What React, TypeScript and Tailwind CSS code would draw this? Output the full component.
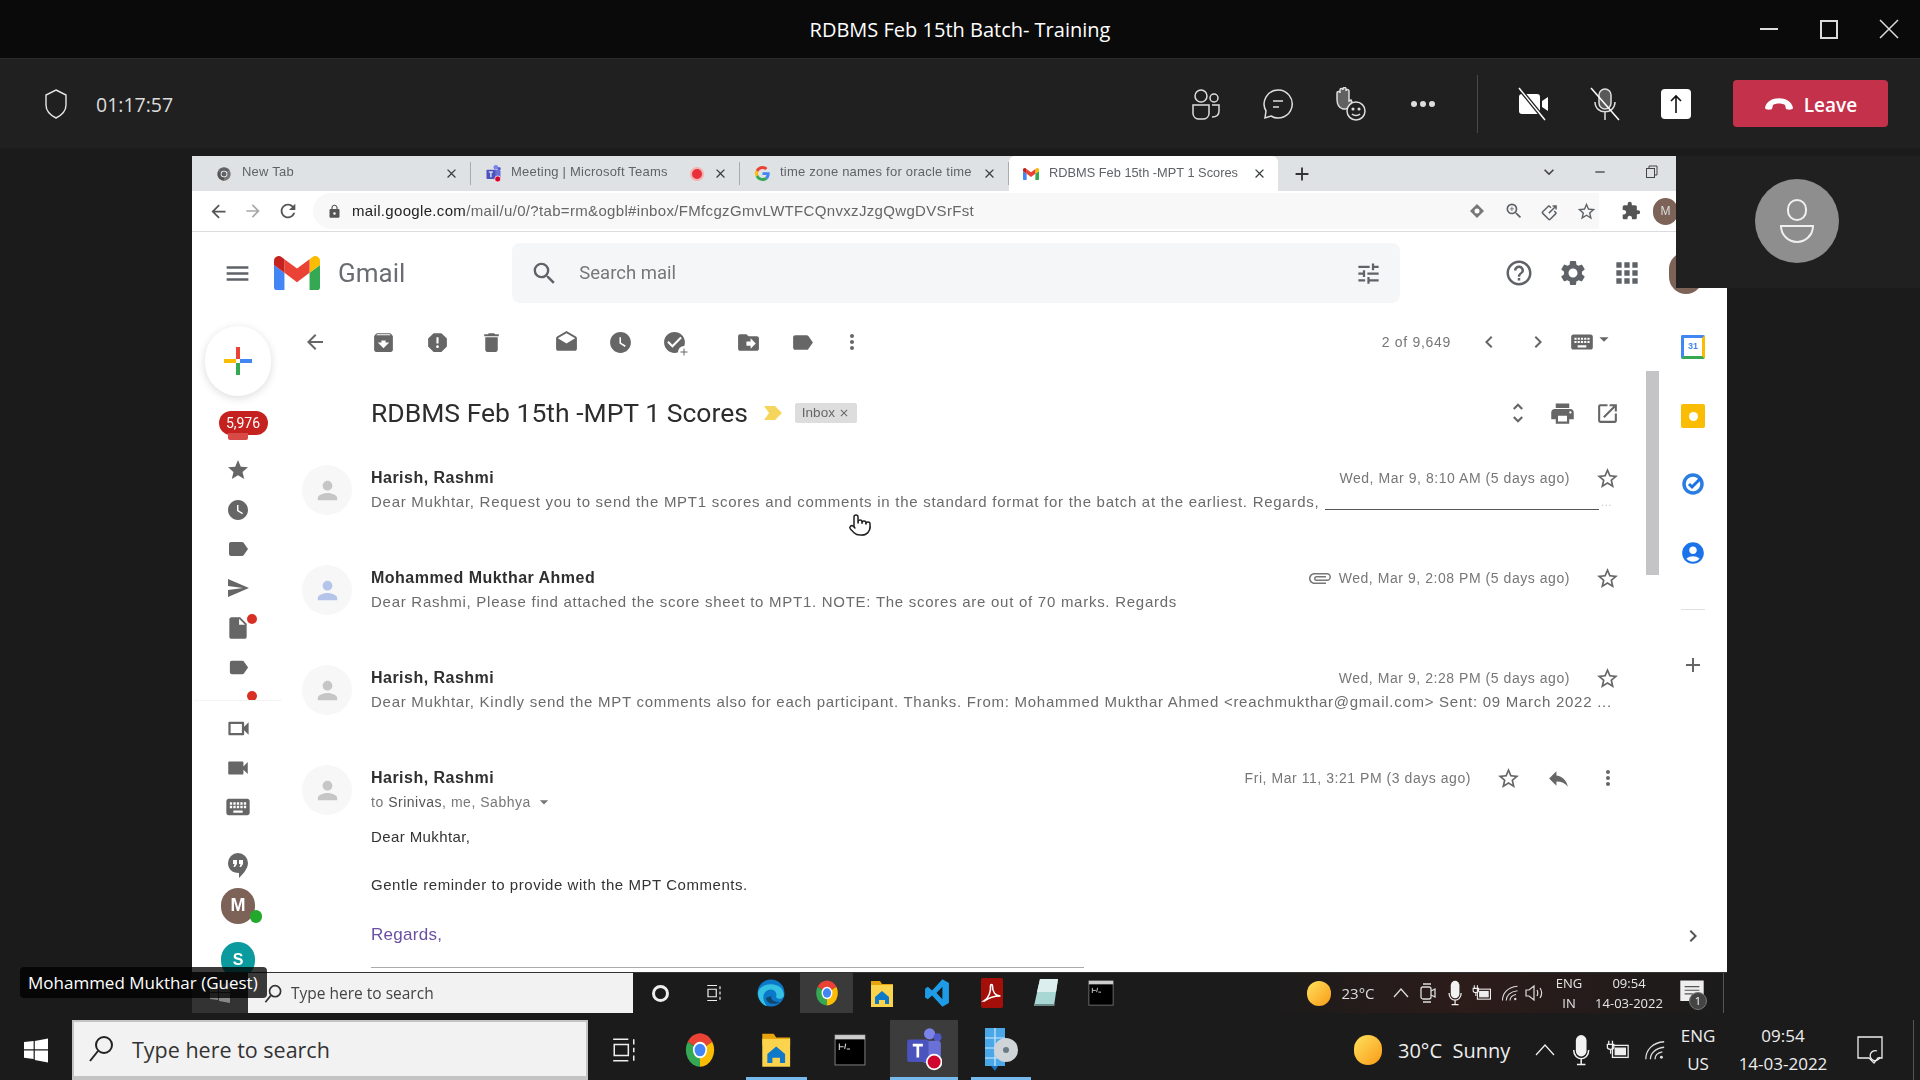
import React from "react";
import { Pointer } from "lucide-react";
import {
  MdArrowBack, MdArrowForward, MdRefresh, MdLock, MdMenu, MdSearch, MdTune, MdHelpOutline, MdSettings, MdApps,
  MdArchive, MdReport, MdDelete, MdDrafts, MdWatchLater, MdCheckCircle, MdDriveFileMove, MdLabel, MdMoreVert,
  MdChevronLeft, MdChevronRight, MdKeyboard, MdArrowDropDown, MdUnfoldMore, MdPrint, MdOpenInNew, MdStarBorder,
  MdStar, MdReply, MdAttachFile, MdVideocam, MdOutlineVideocam, MdPerson, MdSend, MdInsertDriveFile, MdAdd,
  MdAccountCircle, MdExtension, MdZoomIn, MdIosShare, MdClose, MdRemove, MdExpandMore,
} from "react-icons/md";

const GmailM = ({ s = 44 }: { s?: number }) => (
  <svg width={s} height={s * 0.75} viewBox="52 42 88 66">
    <path fill="#4285f4" d="M58 108h14V74L52 59v43c0 3.32 2.69 6 6 6" />
    <path fill="#34a853" d="M120 108h14c3.32 0 6-2.69 6-6V59l-20 15" />
    <path fill="#fbbc04" d="M120 48v26l20-15v-8c0-7.42-8.47-11.65-14.4-7.2" />
    <path fill="#ea4335" d="M72 74V48l24 18 24-18v26L96 92" />
    <path fill="#c5221f" d="M52 51v8l20 15V48l-5.6-4.2c-5.94-4.45-14.4-.22-14.4 7.2" />
  </svg>
);
const GoogleG = ({ s = 14 }: { s?: number }) => (
  <svg width={s} height={s} viewBox="0 0 48 48">
    <path fill="#EA4335" d="M24 9.5c3.54 0 6.71 1.22 9.21 3.6l6.85-6.85C35.9 2.38 30.47 0 24 0 14.62 0 6.51 5.38 2.56 13.22l7.98 6.19C12.43 13.72 17.74 9.5 24 9.5z" />
    <path fill="#4285F4" d="M46.98 24.55c0-1.57-.15-3.09-.38-4.55H24v9.02h12.94c-.58 2.96-2.26 5.48-4.78 7.18l7.73 6c4.51-4.18 7.09-10.36 7.09-17.65z" />
    <path fill="#FBBC05" d="M10.53 28.59c-.48-1.45-.76-2.99-.76-4.59s.27-3.14.76-4.59l-7.98-6.19C.92 16.46 0 20.12 0 24c0 3.88.92 7.54 2.56 10.78l7.97-6.19z" />
    <path fill="#34A853" d="M24 48c6.48 0 11.93-2.13 15.89-5.81l-7.73-6c-2.15 1.45-4.92 2.3-8.16 2.3-6.26 0-11.57-4.22-13.47-9.91l-7.98 6.19C6.51 42.62 14.62 48 24 48z" />
  </svg>
);
const Chrome = ({ s = 30, w, mono }: { s?: number; w?: number; mono?: boolean }) => (
  <svg width={w ?? s} height={s} viewBox="0 0 48 48" preserveAspectRatio="none">
    <path fill={mono ? "#5f6368" : "#ea4335"} d="M24 24L6.68 14A20 20 0 0 1 41.32 14z" />
    <path fill={mono ? "#777" : "#fbbc04"} d="M24 24L41.32 14A20 20 0 0 1 24 44z" />
    <path fill={mono ? "#555" : "#34a853"} d="M24 24L24 44A20 20 0 0 1 6.68 14z" />
    <circle cx="24" cy="24" r="10" fill="#fff" />
    <circle cx="24" cy="24" r="7.6" fill={mono ? "#5f6368" : "#4285f4"} />
  </svg>
);
const Folder = ({ s = 32 }: { s?: number }) => (
  <svg width={s * 0.8} height={s} viewBox="0 0 24 30">
    <path fill="#e8a40c" d="M1 3h9l2 3h11v6H1z" />
    <path fill="#fcd34d" d="M1 7h22v22H1z" />
    <path fill="#0f78c9" d="M12 13l7 6v7h-4v-4H9v4H5v-7z" />
  </svg>
);
const Cmd = ({ s = 30 }: { s?: number }) => (
  <svg width={s} height={s} viewBox="0 0 30 30">
    <rect x="1" y="1" width="28" height="28" fill="#000" stroke="#777" />
    <rect x="1" y="1" width="28" height="4" fill="#ccc" />
    <path d="M5 12h4M5 9v6M11 9l-1 5M12 14h3" stroke="#ddd" strokeWidth="1" fill="none" />
  </svg>
);
const Teams = ({ s = 40 }: { s?: number }) => (
  <svg width={s} height={s * 1.25} viewBox="0 0 32 40">
    <circle cx="21" cy="7" r="5" fill="#7b83eb" />
    <circle cx="28" cy="10" r="3.5" fill="#5059c9" />
    <rect x="15" y="13" width="16" height="20" rx="3" fill="#6a71d6" />
    <rect x="1" y="12" width="19" height="20" rx="2" fill="#4b53bc" />
    <path d="M6 17h9M10.5 17v11" stroke="#fff" strokeWidth="2.4" fill="none" />
    <circle cx="25" cy="32" r="6.5" fill="#d1062f" stroke="#fff" strokeWidth="1.5" />
  </svg>
);
const SetupIcon = () => (
  <svg width="36" height="46" viewBox="0 0 36 46">
    <rect x="2" y="2" width="20" height="38" fill="#4aa7e8" />
    <path d="M2 12h20M2 22h20M2 32h20M12 2v38" stroke="#cfe9fb" strokeWidth="1.2" />
    <circle cx="23" cy="24" r="12" fill="#cfd4d8" />
    <circle cx="23" cy="24" r="3" fill="#6b7a85" />
    <path d="M8 40l4 5 3-5z" fill="#1670bd" />
  </svg>
);
const Edge = () => (
  <svg width="28" height="30" viewBox="0 0 28 30">
    <circle cx="14" cy="15" r="13.5" fill="#0b79c9" />
    <path d="M1 15C2 4 26 2 27 17c0 4-6 5-8 2 2-5-3-9-8-7-5 2-7 9-1 16C5 27 1 21 1 15z" fill="#35c1e1" />
    <path d="M9 20c0 5 8 8 14 4-6 0-9-2-9-6z" fill="#1b1b1b" opacity=".55" />
  </svg>
);
const VSCode = () => (
  <svg width="26" height="30" viewBox="0 0 24 24" preserveAspectRatio="none">
    <path fill="#1f9ce8" fillRule="evenodd" d="M17 1l6 3v16l-6 3-9.5-9-4 3L1 15.5v-7L3.500 7l4 3L17 1zM17 7l-5.500 5 5.500 5z" />
  </svg>
);
const Acrobat = () => (
  <svg width="22" height="30" viewBox="0 0 22 30">
    <rect width="22" height="30" rx="2" fill="#a50f0a" />
    <path d="M3 23c5-3 7-10 6.500-15 0-2 2-2 2 0 0 6 3 10 8 10-6 0-11 1-16 5z" fill="none" stroke="#fff" strokeWidth="1.6" />
  </svg>
);
const Notes = () => (
  <svg width="26" height="30" viewBox="0 0 26 30">
    <path d="M7 1h18l-4 27H1z" fill="#a9d8d4" />
    <path d="M7 1h18l-2 13H4z" fill="#dceeee" />
    <path d="M1 28h20l1-2H2z" fill="#6b8a88" />
  </svg>
);
const Sun = ({ w, h }: { w: number; h: number }) => (
  <div className="rounded-full bg-gradient-to-br from-[#fde25b] to-[#f89a06]" style={{ width: w, height: h }} />
);
const WifiIcon = ({ s = 22 }: { s?: number }) => (
  <svg width={s} height={s} viewBox="0 0 24 24" fill="none" stroke="#ddd" strokeWidth="1.4">
    <path d="M2 22C2 12 9 4 22 3M7 22c0-6 5-12 15-13M12 22c0-4 3-7 8-8" />
    <circle cx="19" cy="20" r="1.600" fill="#ddd" stroke="none" />
  </svg>
);
const MicFill = ({ h = 32 }: { h?: number }) => (
  <svg width={h * 0.7} height={h} viewBox="0 0 20 30">
    <rect x="5" y="1" width="10" height="20" rx="5" fill="#f2f2f2" />
    <path d="M3 15c0 11 14 11 14 0M10 23v5M6 28.500h8" stroke="#f2f2f2" strokeWidth="1.400" fill="none" />
  </svg>
);
const PowerIcon = ({ s = 26 }: { s?: number }) => (
  <svg width={s} height={s} viewBox="0 0 26 26" fill="none" stroke="#eee" strokeWidth="1.400">
    <rect x="7" y="8" width="17" height="13" />
    <rect x="10" y="11" width="11" height="7" fill="#eee" />
    <path d="M3 3v4M7 3v4M1.500 7h7v3c0 3-7 3-7 0zM5 13v4" />
  </svg>
);
const NotifIcon = ({ filled }: { filled?: boolean }) => (
  <svg width="26" height="28" viewBox="0 0 26 28" fill={filled ? "#eee" : "none"} stroke="#eee" strokeWidth="1.300">
    <path d="M1 1h24v21h-4l-4 5-5-5H1z" fill={filled ? "#eee" : "none"} />
    {filled ? <path d="M5 7h16M5 11h16M5 15h9" stroke="#555" /> : <path d="M20 15a5 5 0 1 0 3 6" />}
  </svg>
);
const Cell = ({ className = "", children }: { className?: string; children?: React.ReactNode }) => (
  <div className={"flex items-center justify-center shrink-0 h-full " + className}>{children}</div>
);
const SlotI = ({ className = "", children }: { className?: string; children?: React.ReactNode }) => (
  <div className={"flex items-center justify-center shrink-0 relative w-full " + className}>{children}</div>
);

const Tab = ({ icon, text, active, extra }: { icon: React.ReactNode; text: string; active?: boolean; extra?: React.ReactNode }) => (
  <div className={"flex items-center w-[269px] pl-[14px] pr-[11px] shrink-0 " + (active ? "h-full bg-white rounded-t-[6px]" : "border-r border-[#a9abae] h-[23px]")}>
    <div className="w-[16px] flex justify-center shrink-0">{icon}</div>
    <span className={"ml-[10px] flex-1 min-w-0 whitespace-nowrap text-[#5f6368] font-['Liberation_Sans',sans-serif] " + (active ? "text-[12.800px] -mt-[1px]" : "text-[13px] tracking-[0.22px] -mt-[3px]")}>{text}</span>
    {extra}
    <MdClose size={15} className="text-[#3c4043] shrink-0" />
  </div>
);

const Avatar = ({ color }: { color: string }) => (
  <div className="mt-[7px] w-[50px] h-[50px] rounded-full bg-[#f7f7f7] flex items-center justify-center shrink-0">
    <MdPerson size={29} style={{ color }} />
  </div>
);
const DateStar = ({ date }: { date: string }) => (
  <div className="flex items-center shrink-0">
    <span className="text-[14px] tracking-[0.55px] text-[#777]">{date}</span>
    <MdStarBorder size={25} className="ml-[25px] text-[#666]" />
  </div>
);
const Row = ({ name, date, snippet, color, attach }: { name: string; date: string; snippet: React.ReactNode; color: string; attach?: boolean }) => (
  <div className="flex h-[100px] pl-[20px] pr-[26px] shrink-0">
    <Avatar color={color} />
    <div className="ml-[19px] flex-1 min-w-0 pt-[8px]">
      <div className="flex items-center justify-between h-[24px]">
        <span className="text-[16px] font-bold tracking-[0.48px] text-[#2f2f2f]">{name}</span>
        <div className="flex items-center">
          {attach && <MdAttachFile size={24} className="mr-[7px] text-[#777] rotate-90" />}
          <DateStar date={date} />
        </div>
      </div>
      <div className="flex items-center h-[24px] text-[15px] tracking-[0.73px] text-[#6b6b6b] whitespace-nowrap overflow-hidden">{snippet}</div>
    </div>
  </div>
);

const Rail = ({ children, className = "" }: { children: React.ReactNode; className?: string }) => (
  <SlotI className={"text-[#666] " + className}>{children}</SlotI>
);

export default function App() {
  return (
    <div className="w-[1920px] h-[1080px] flex flex-col overflow-hidden bg-[#1b1b1b] text-white font-['Open_Sans',sans-serif]">
      {/* title bar */}
      <div className="h-[58px] bg-[#0a0a0a] grid grid-cols-3 items-center shrink-0">
        <div />
        <div className="text-center text-[20px] text-white pt-[2px]">RDBMS Feb 15th Batch- Training</div>
        <div className="flex justify-end h-full pr-px">
          <Cell className="w-[60px]"><div className="w-[18px] h-[2px] bg-[#ddd]" /></Cell>
          <Cell className="w-[60px]"><div className="w-[18px] h-[19px] border-2 border-[#ddd]" /></Cell>
          <Cell className="w-[60px]">
            <svg width="20" height="20" viewBox="0 0 20 20" stroke="#ddd" strokeWidth="1.500"><path d="M1 1l18 18M19 1L1 19" /></svg>
          </Cell>
        </div>
      </div>
      {/* meeting toolbar */}
      <div className="h-[90px] bg-[#202020] border-t border-[#2c2c2c] flex items-center pl-[44px] shrink-0">
        <svg width="24" height="30" viewBox="0 0 24 30" fill="none" stroke="#e6e6e6" strokeWidth="1.400">
          <path d="M12 1l10 5v10c0 6-4 10-10 13C6 26 2 22 2 16V6z" />
        </svg>
        <span className="ml-[28px] text-[19.500px] pt-[2px] text-[#dcdcdc]">01:17:57</span>
        <div className="ml-auto flex items-center h-[58px] pr-[32px]">
          <Cell className="w-[40px]">
            <svg width="32" height="32" viewBox="0 0 32 32" fill="none" stroke="#ddd" strokeWidth="1.500">
              <circle cx="11" cy="8" r="6" /><circle cx="24" cy="10" r="4" />
              <path d="M3 17h16v9a6 6 0 0 1-6 5H9a6 6 0 0 1-6-5zM22 17h7v6c0 4-3 6-7 6" />
            </svg>
          </Cell>
          <Cell className="ml-[32px] w-[40px]">
            <svg width="32" height="32" viewBox="0 0 32 32" fill="none" stroke="#ddd" strokeWidth="1.500">
              <path d="M16 2a14 14 0 1 1-7 26l-6 2 1-7A14 14 0 0 1 16 2z" /><path d="M11 13h10M11 19h6" />
            </svg>
          </Cell>
          <Cell className="ml-[33px] w-[40px]">
            <svg width="32" height="34" viewBox="0 0 32 34" fill="none" stroke="#ddd" strokeWidth="1.500">
              <path d="M2 13V6a1.500 1.500 0 0 1 3 0V3a1.500 1.500 0 0 1 3 0V2a1.500 1.500 0 0 1 3 0v2a1.500 1.500 0 0 1 3 0v10l2-1 1 2-3 5-3 2H8c-4-1-6-5-6-10z" fill="#ddd" fillOpacity=".35" />
              <circle cx="21" cy="24" r="9" fill="#202020" /><circle cx="18" cy="22" r=".8" fill="#ddd" /><circle cx="24" cy="22" r=".8" fill="#ddd" />
              <path d="M17 27c2 2 6 2 8 0" />
            </svg>
          </Cell>
          <Cell className="ml-[32px] w-[40px] gap-[3px]">
            <div className="w-[6px] h-[6px] rounded-full bg-[#ddd]" /><div className="w-[6px] h-[6px] rounded-full bg-[#ddd]" /><div className="w-[6px] h-[6px] rounded-full bg-[#ddd]" />
          </Cell>
          <div className="ml-[34px] w-px h-[58px] bg-[#4a4a4a] shrink-0" />
          <Cell className="ml-[35px] w-[40px]">
            <svg width="34" height="34" viewBox="0 0 34 34">
              <rect x="3" y="7" width="21" height="20" rx="3" fill="#fff" />
              <path d="M26 14l6-4v14l-6-4z" fill="#fff" />
              <path d="M3 1l26 32" stroke="#202020" strokeWidth="4" />
              <path d="M3 1l26 32" stroke="#fff" strokeWidth="1.500" />
            </svg>
          </Cell>
          <Cell className="ml-[32px] w-[40px]">
            <svg width="34" height="34" viewBox="0 0 34 34" fill="none" stroke="#ddd" strokeWidth="1.500">
              <rect x="11" y="2" width="12" height="20" rx="6" fill="#ddd" fillOpacity=".3" />
              <path d="M7 15c0 13 20 13 20 0M17 25v8" />
              <path d="M3 1l28 32" stroke="#fff" />
            </svg>
          </Cell>
          <Cell className="ml-[31px] w-[40px]">
            <div className="w-[30px] h-[30px] rounded-[4px] bg-white flex items-center justify-center">
              <svg width="14" height="20" viewBox="0 0 14 20" fill="none" stroke="#111" strokeWidth="1.600"><path d="M7 19V2M2 7l5-5 5 5" /></svg>
            </div>
          </Cell>
          <div className="ml-[37px] w-[155px] h-[47px] rounded-[4px] bg-[#c4314b] flex items-center justify-center gap-[10px] shrink-0">
            <svg width="30" height="16" viewBox="0 0 30 16" className="-mt-[2px]"><path d="M1 13C3 0 27 0 29 13c0 2-6 2-7 1l-1-4c-3-2-9-2-12 0l-1 4c-1 1-7 1-7-1z" fill="#fff" /></svg>
            <span className="text-[19px] font-semibold text-white pt-[3px]">Leave</span>
          </div>
        </div>
      </div>
      {/* stage */}
      <div className="relative flex-1 pl-[192px] pt-[8px] min-h-0">
        <div className="w-[1535px] flex flex-col blur-[0.5px]">
          <div className="h-[816px] flex flex-col bg-white font-['Liberation_Sans',sans-serif] overflow-hidden">
            {/* tabs */}
            <div className="h-[35px] bg-[#dfe2e5] flex items-center pl-[10px] shrink-0">
              <Tab icon={<Chrome s={16} mono />} text="New Tab" />
              <Tab icon={<Teams s={15} />} text="Meeting | Microsoft Teams" extra={<div className="mr-[9px] w-[14px] h-[14px] rounded-full bg-[#e8303a] border-2 border-[#f6b0b0] shrink-0" />} />
              <Tab icon={<GoogleG s={15} />} text="time zone names for oracle time" />
              <Tab active icon={<GmailM s={16} />} text="RDBMS Feb 15th -MPT 1 Scores" />
              <MdAdd size={22} className="ml-[13px] text-[#333] shrink-0" />
              <div className="ml-auto flex items-center text-[#444] -mt-[3px]">
                <MdExpandMore size={20} />
                <MdRemove size={16} className="ml-[33px]" />
                <svg width="14" height="14" viewBox="0 0 14 14" fill="none" stroke="#444" className="ml-[37px] mr-[68px]"><rect x="1.500" y="3.500" width="8" height="9" /><path d="M4 3V1h8v9h-2" /></svg>
              </div>
            </div>
            {/* address bar */}
            <div className="h-[41px] bg-white border-b border-[#dadce0] flex items-center pl-[16px] shrink-0 text-[#5f6368]">
              <MdArrowBack size={21} className="text-[#555]" />
              <MdArrowForward size={20} className="ml-[14px] text-[#a8a8a8]" />
              <MdRefresh size={22} className="ml-[14px] text-[#555]" />
              <div className="ml-[14px] w-[1286px] h-[36px] bg-[#f8f8f8] flex items-center pl-[14px] rounded-l-full">
                <MdLock size={15} className="text-[#555]" />
                <span className="ml-[10px] text-[15px] tracking-[0.33px] whitespace-nowrap text-[#666]"><span className="text-[#222]">mail.google.com</span>/mail/u/0/?tab=rm&amp;ogbl#inbox/FMfcgzGmvLWTFCQnvxzJzgQwgDVSrFst</span>
                <div className="ml-auto flex items-center mr-[2px] gap-[18px]">
                  <svg width="18" height="18" viewBox="0 0 18 18"><path d="M9 2l7 7-7 7-7-7z" fill="#777" /><circle cx="9" cy="9" r="2.500" fill="#fff" /></svg>
                  <MdZoomIn size={20} />
                  <MdIosShare size={18} className="rotate-45" />
                  <MdStarBorder size={21} className="-ml-[2px]" />
                </div>
              </div>
              <MdExtension size={20} className="ml-[22px] text-[#555]" />
              <div className="ml-[12px] w-[25px] h-[27px] rounded-full bg-[#7d6258] text-[#ddd] text-[12px] flex items-center justify-center shrink-0">M</div>
            </div>
            {/* gmail header */}
            <div className="h-[84px] flex items-center shrink-0 pb-[2px] text-[#5f6368]">
              <MdMenu size={29} className="ml-[31px]" />
              <div className="ml-[22px]"><GmailM s={46} /></div>
              <span className="ml-[18px] text-[26px] font-['Roboto',sans-serif] text-[#6a6e73]">Gmail</span>
              <div className="ml-[107px] w-[888px] h-[60px] bg-[#f5f6f7] rounded-[8px] flex items-center pl-[18px] pr-[18px]">
                <MdSearch size={29} />
                <span className="ml-[20px] pt-[2px] text-[18.500px] text-[#777] font-['Roboto',sans-serif]">Search mail</span>
                <MdTune size={27} className="ml-auto" />
              </div>
              <MdHelpOutline size={30} className="ml-[104px]" />
              <MdSettings size={30} className="ml-[24px]" />
              <MdApps size={32} className="ml-[23px]" />
              <div className="ml-[26px] w-[34px] h-[42px] rounded-full bg-[#7d6258]" />
            </div>
            {/* gmail body */}
            <div className="h-[656px] flex min-h-0 overflow-hidden">
              {/* left rail */}
              <div className="w-[90px] pl-[2px] shrink-0 flex flex-col">
                <SlotI className="h-[90px]">
                  <div className="w-[66px] h-[70px] rounded-full bg-white shadow-[0_2px_8px_rgba(0,0,0,0.14)] flex items-center justify-center">
                    <svg width="32" height="32" viewBox="0 0 32 32">
                      <path d="M14 2h4v12h-4z" fill="#ea4335" /><path d="M18 14h12v4H18z" fill="#4285f4" />
                      <path d="M14 18h4v12h-4z" fill="#34a853" /><path d="M2 14h12v4H2z" fill="#fbbc04" />
                    </svg>
                  </div>
                </SlotI>
                <SlotI className="h-[44px] items-start">
                  <div className="ml-[10px] mt-[5px] h-[24px] w-[49px] rounded-full bg-[#c5221f] text-white text-[14px] font-['Roboto',sans-serif] flex items-center justify-center">5,976</div>
                  <div className="absolute left-[34px] top-[27px] w-[20px] h-[7px] bg-[#d84a45] rounded-b-[2px]" />
                </SlotI>
                <Rail className="h-[40px]"><MdStar size={24} /></Rail>
                <Rail className="h-[39px]"><MdWatchLater size={24} /></Rail>
                <Rail className="h-[39px]"><MdLabel size={24} /></Rail>
                <Rail className="h-[40px]"><MdSend size={24} /></Rail>
                <Rail className="h-[39px]">
                  <MdInsertDriveFile size={26} />
                  <div className="absolute left-[53px] top-[6px] w-[10px] h-[10px] rounded-full bg-[#d93025]" />
                </Rail>
                <Rail className="h-[40px]"><MdLabel size={23} /></Rail>
                <div className="h-[21px] shrink-0 relative overflow-hidden">
                  <div className="absolute left-[53px] top-[4px] w-[10px] h-[10px] rounded-full bg-[#d93025]" />
                  <div className="absolute left-0 right-0 top-[13px] h-[8px] bg-white border-t border-[#f4f4f4]" />
                </div>
                <Rail className="h-[40px]"><MdOutlineVideocam size={27} /></Rail>
                <Rail className="h-[39px]"><MdVideocam size={26} /></Rail>
                <Rail className="h-[40px]"><MdKeyboard size={28} /></Rail>
                <div className="h-[19px] shrink-0" />
                <Rail className="h-[40px]">
                  <svg width="22" height="28" viewBox="0 0 22 28"><path d="M11 1a10 10 0 0 1 10 10c0 6-6 12-9 15v-5C5 21 1 17 1 11A10 10 0 0 1 11 1z" fill="#666" /><path d="M6 8h4v4l-2 3H6.500l1-3H6zM12 8h4v4l-2 3h-1.500l1-3H12z" fill="#fff" /></svg>
                </Rail>
                <SlotI className="h-[39px]">
                  <div className="w-[34px] h-[36px] rounded-full bg-[#7d6258] text-white text-[18px] font-bold flex items-center justify-center">M</div>
                  <div className="absolute left-[56px] top-[24px] w-[12px] h-[13px] rounded-full bg-[#22a82b]" />
                </SlotI>
                <div className="h-[17px] shrink-0" />
                <SlotI className="h-[36px] shrink-0">
                  <div className="w-[34px] h-[36px] rounded-full bg-[#0b9a9e] text-white text-[16px] font-bold flex items-center justify-center">S</div>
                </SlotI>
              </div>
              {/* center */}
              <div className="flex-1 min-w-0 flex flex-col">
                <div className="h-[52px] flex items-center pl-[21px] pr-[31px] shrink-0 text-[#666]">
                  <MdArrowBack size={24} />
                  <div className="ml-[44px] flex gap-[29px]">
                    <MdArchive size={25} /><MdReport size={25} /><MdDelete size={25} />
                  </div>
                  <div className="ml-[50px] flex gap-[29px]">
                    <MdDrafts size={25} /><MdWatchLater size={25} />
                    <div className="relative">
                      <MdCheckCircle size={25} />
                      <MdAdd size={12} className="absolute -right-[3px] -bottom-[3px] bg-white rounded-full text-[#666]" />
                    </div>
                  </div>
                  <div className="ml-[49px] flex gap-[29px]">
                    <MdDriveFileMove size={25} /><MdLabel size={25} />
                  </div>
                  <MdMoreVert size={24} className="ml-[25px]" />
                  <span className="ml-auto text-[14px] tracking-[0.7px] text-[#777]">2 of 9,649</span>
                  <MdChevronLeft size={24} className="ml-[26px]" />
                  <MdChevronRight size={24} className="ml-[25px]" />
                  <MdKeyboard size={26} className="ml-[19px]" />
                  <MdArrowDropDown size={22} className="-ml-[2px] -mt-[6px]" />
                </div>
                <div className="h-[90px] flex items-center pl-[89px] pr-[26px] shrink-0">
                  <span className="text-[26.500px] text-[#2d2d2d] font-['Roboto',sans-serif] whitespace-nowrap">RDBMS Feb 15th -MPT 1 Scores</span>
                  <svg width="20" height="16" viewBox="0 0 20 16" className="ml-[15px] shrink-0"><path d="M1 1h11l7 7-7 7H1l5-7z" fill="#f6d55c" /></svg>
                  <div className="ml-[12px] w-[62px] h-[20px] bg-[#dddddd] text-[#666] text-[13.500px] flex items-center justify-center gap-[3px] rounded-[2px]">Inbox <MdClose size={12} /></div>
                  <div className="ml-auto flex items-center text-[#666]">
                    <MdUnfoldMore size={26} /><MdPrint size={27} className="ml-[18px]" /><MdOpenInNew size={25} className="ml-[19px] mr-0" />
                  </div>
                </div>
                <Row name="Harish, Rashmi" date="Wed, Mar 9, 8:10 AM (5 days ago)" color="#c6c6c6" snippet={<>
                  <span className="shrink-0">Dear Mukhtar, Request you to send the MPT1 scores and comments in the standard format for the batch at the earliest. Regards,</span>
                  <span className="ml-[6px] w-[274px] h-px bg-[#555] shrink-0 mt-[14px]" />
                  <span className="text-[#bbb] text-[10px] ml-[2px] shrink-0">...</span>
                </>} />
                <Row name="Mohammed Mukthar Ahmed" date="Wed, Mar 9, 2:08 PM (5 days ago)" color="#b5c5ea" attach snippet="Dear Rashmi, Please find attached the score sheet to MPT1. NOTE: The scores are out of 70 marks. Regards" />
                <Row name="Harish, Rashmi" date="Wed, Mar 9, 2:28 PM (5 days ago)" color="#c6c6c6" snippet="Dear Mukhtar, Kindly send the MPT comments also for each participant. Thanks. From: Mohammed Mukthar Ahmed <reachmukthar@gmail.com> Sent: 09 March 2022 ..." />
                <div className="flex pl-[20px] pr-[26px]">
                  <Avatar color="#c6c6c6" />
                  <div className="ml-[19px] flex-1 min-w-0 pt-[8px]">
                    <div className="flex items-center justify-between h-[24px]">
                      <span className="text-[16px] font-bold tracking-[0.48px] text-[#2f2f2f]">Harish, Rashmi</span>
                      <div className="flex items-center text-[#666]">
                        <span className="text-[14px] tracking-[0.55px] text-[#777]">Fri, Mar 11, 3:21 PM (3 days ago)</span>
                        <MdStarBorder size={25} className="ml-[25px]" />
                        <MdReply size={25} className="ml-[25px]" />
                        <MdMoreVert size={24} className="ml-[25px]" />
                      </div>
                    </div>
                    <div className="flex items-center h-[24px] text-[14px] tracking-[0.52px] text-[#777]">to&nbsp;<span className="text-[#555]">Srinivas</span>, me, Sabhya<MdArrowDropDown size={20} className="ml-[3px]" /></div>
                    <div className="mt-[11px] h-[24px] flex items-center text-[15px] tracking-[0.4px] text-[#333]">Dear Mukhtar,</div>
                    <div className="mt-[24px] h-[24px] flex items-center text-[15px] tracking-[0.55px] text-[#333]">Gentle reminder to provide with the MPT Comments.</div>
                    <div className="mt-[26px] h-[24px] flex items-center text-[17px] tracking-[0.3px] text-[#6a4fa3]">Regards,</div>
                    <div className="mt-[20px] w-[713px] h-px bg-[#aaa]" />
                  </div>
                </div>
              </div>
              {/* scrollbar */}
              <div className="w-[13px] shrink-0 pt-[55px]"><div className="h-[204px] bg-[#c4c4c6]" /></div>
              {/* right rail */}
              <div className="w-[68px] shrink-0 flex flex-col items-center pt-[19px] pb-[24px]">
                <div className="w-[24px] h-[24px] rounded-[2px] bg-white border-[3px] border-[#4285f4] border-r-[#fbbc04] border-b-[#34a853] text-[#4285f4] text-[9px] font-bold flex items-center justify-center">31</div>
                <div className="mt-[45px] w-[24px] h-[24px] rounded-[2px] bg-[#fbbc04] flex items-center justify-center"><div className="w-[9px] h-[9px] rounded-full bg-white" /></div>
                <svg width="24" height="24" viewBox="0 0 24 24" fill="none" className="mt-[44px]"><circle cx="12" cy="12" r="9" stroke="#2a7de1" strokeWidth="3.500" /><path d="M8 12l3 3 9-9" stroke="#1a73e8" strokeWidth="3" /></svg>
                <MdAccountCircle size={26} className="mt-[44px] text-[#1a73e8]" />
                <div className="mt-[43px] w-[24px] h-px bg-[#e0e0e0]" />
                <MdAdd size={24} className="mt-[43px] text-[#666]" />
                <MdChevronRight size={24} className="mt-auto text-[#555]" />
              </div>
            </div>
          </div>
          {/* remote taskbar */}
          <div className="h-[41px] bg-gradient-to-r from-[#1b1b1b] from-70% via-[#2c1c1a] via-83% to-[#1b1b1b] flex items-center shrink-0 border-t border-[#333]">
            <Cell className="w-[56px] bg-[#333]">
              <svg width="20" height="20" viewBox="0 0 20 20" fill="#888"><path d="M0 3l8-1v7H0zM9 2l11-2v9H9zM0 10h8v7l-8-1zM9 10h11v10l-11-2z" /></svg>
            </Cell>
            <div className="w-[385px] h-full bg-[#f2f2f2] flex items-center pl-[16px] pt-[2px] shrink-0">
              <svg width="18" height="20" viewBox="0 0 26 28" fill="none" stroke="#333" strokeWidth="2.400"><circle cx="16" cy="10" r="8" /><path d="M10 16L2 26" /></svg>
              <span className="ml-[9px] text-[15.500px] text-[#444]">Type here to search</span>
            </div>
            <Cell className="ml-[7px] w-[40px]"><div className="w-[17px] h-[17px] rounded-full border-[3px] border-[#eee]" /></Cell>
            <Cell className="ml-[14px] w-[40px]">
              <svg width="18" height="18" viewBox="0 0 24 24" fill="none" stroke="#eee" strokeWidth="1.600"><path d="M3 2h13M3 22h13M4 7h11v10H4zM20 3v4M20 10v4M20 17v4" /></svg>
            </Cell>
            <Cell className="ml-[17px] w-[40px]"><Edge /></Cell>
            <Cell className="ml-[9px] w-[53px] bg-[#3a3a3a]"><Chrome s={30} w={26} /></Cell>
            <Cell className="ml-[9px] w-[40px]"><Folder s={30} /></Cell>
            <Cell className="ml-[15px] w-[40px]"><VSCode /></Cell>
            <Cell className="ml-[15px] w-[40px]"><Acrobat /></Cell>
            <Cell className="ml-[14px] w-[40px]"><Notes /></Cell>
            <Cell className="ml-[15px] w-[40px]"><Cmd s={26} /></Cell>
            <Cell className="ml-[184px] w-[28px]"><Sun w={24} h={25} /></Cell>
            <Cell className="ml-[5px] w-[40px]"><span className="text-[15px] text-[#ddd]">23°C</span></Cell>
            <Cell className="ml-[13px] w-[20px]"><svg width="16" height="10" viewBox="0 0 16 10" fill="none" stroke="#ddd" strokeWidth="1.300"><path d="M1 9l7-8 7 8" /></svg></Cell>
            <Cell className="ml-[7px] w-[20px]">
              <svg width="16" height="24" viewBox="0 0 16 24" fill="none" stroke="#ddd" strokeWidth="1.300"><rect x="1" y="6" width="10" height="12" rx="2" /><path d="M11 10l4-2v8l-4-2M3 3h8M3 21h8" /></svg>
            </Cell>
            <Cell className="ml-[7px] w-[20px]"><MicFill h={26} /></Cell>
            <Cell className="ml-[7px] w-[20px]"><PowerIcon s={20} /></Cell>
            <Cell className="ml-[8px] w-[20px]"><WifiIcon s={18} /></Cell>
            <Cell className="ml-[4px] w-[20px]">
              <svg width="18" height="18" viewBox="0 0 18 18" fill="none" stroke="#ddd" strokeWidth="1.200"><path d="M1 6h3l5-4v14l-5-4H1zM12 6c1 2 1 4 0 6M15 4c2 3 2 7 0 10" /></svg>
            </Cell>
            <div className="ml-[8px] w-[34px] text-center text-[13px] leading-[20px] text-[#e6e6e6] shrink-0">ENG<br />IN</div>
            <div className="ml-[1px] w-[84px] text-center text-[13px] leading-[20px] text-[#e6e6e6] shrink-0">09:54<br />14-03-2022</div>
            <Cell className="ml-[9px] w-[24px] relative">
              <NotifIcon filled />
              <div className="absolute left-[9px] top-[19px] w-[18px] h-[18px] rounded-full bg-[#444] border border-[#777] text-[11px] text-white flex items-center justify-center">1</div>
            </Cell>
            <div className="ml-[19px] w-px h-full bg-[#555] shrink-0" />
          </div>
        </div>
        {/* shared mouse pointer */}
        <Pointer size={24} strokeWidth={1.500} className="absolute left-[848px] top-[365px] text-[#222] fill-white" />
        {/* video tile */}
        <div className="absolute left-[1676px] top-[8px] w-[244px] h-[132px] bg-[#202020] flex items-center justify-center pr-[2px] pb-[2px]">
          <div className="w-[84px] h-[84px] rounded-full bg-[#8e8e8e] flex flex-col items-center justify-center gap-[4px]">
            <div className="w-[20px] h-[22px] rounded-full border-2 border-[#f0f0f0]" />
            <div className="w-[34px] h-[18px] rounded-b-full border-2 border-[#f0f0f0]" />
          </div>
        </div>
        {/* tooltip */}
        <div className="absolute left-[20px] top-[819px] w-[247px] h-[31px] rounded-[4px] bg-[#000000c4] text-[17px] text-white flex items-center pl-[8px] whitespace-nowrap">Mohammed Mukthar (Guest)</div>
      </div>
      {/* bottom taskbar */}
      <div className="h-[60px] bg-[#1b1b1b] flex items-center shrink-0">
        <Cell className="w-[72px]">
          <svg width="24" height="25" viewBox="0 0 20 20" fill="#fff"><path d="M0 3l8-1v7H0zM9 2l11-2v9H9zM0 10h8v7l-8-1zM9 10h11v10l-11-2z" /></svg>
        </Cell>
        <div className="w-[516px] h-full bg-[#f2f2f2] border-[2px] border-[#c4c4c4] border-b-[4px] flex items-center pl-[14px] shrink-0">
          <svg width="26" height="28" viewBox="0 0 26 28" fill="none" stroke="#222" strokeWidth="2"><circle cx="16" cy="10" r="8" /><path d="M10 16L2 26" /></svg>
          <span className="ml-[18px] text-[21.500px] pt-[2px] text-[#333]">Type here to search</span>
        </div>
        <Cell className="w-[72px]">
          <svg width="26" height="28" viewBox="0 0 24 24" fill="none" stroke="#eee" strokeWidth="1.400"><path d="M2 2h14M2 22h14M3 7h13v10H3zM21 2v5M21 10v4M21 17v5" /></svg>
        </Cell>
        <Cell className="w-[80px]"><Chrome s={40} w={34} /></Cell>
        <Cell className="ml-[6px] w-[61px] border-b-[3px] border-[#76b9ed]"><Folder s={38} /></Cell>
        <Cell className="ml-[5px] w-[76px]"><Cmd s={32} /></Cell>
        <Cell className="ml-[2px] w-[68px] bg-[#3c3c3c] border-b-[3px] border-[#76b9ed]"><Teams s={36} /></Cell>
        <Cell className="ml-[13px] w-[60px] border-b-[3px] border-[#76b9ed]"><SetupIcon /></Cell>
        <Cell className="ml-[323px] w-[28px]"><Sun w={28} h={30} /></Cell>
        <div className="ml-[16px] w-[113px] text-[20px] pt-[2px] text-[#eee] whitespace-nowrap shrink-0">30°C&nbsp; Sunny</div>
        <Cell className="ml-[20px] w-[28px]"><svg width="20" height="12" viewBox="0 0 20 12" fill="none" stroke="#eee" strokeWidth="1.300"><path d="M1 11l9-10 9 10" /></svg></Cell>
        <Cell className="ml-[8px] w-[28px]"><MicFill h={32} /></Cell>
        <Cell className="ml-[9px] w-[28px]"><PowerIcon s={24} /></Cell>
        <Cell className="ml-[9px] w-[28px]"><WifiIcon s={22} /></Cell>
        <div className="ml-[6px] w-[46px] text-center text-[17px] leading-[28px] text-[#eee] shrink-0">ENG<br />US</div>
        <div className="ml-[7px] w-[110px] text-center text-[17px] leading-[28px] text-[#eee] shrink-0">09:54<br />14-03-2022</div>
        <Cell className="ml-[18px] w-[28px]"><NotifIcon /></Cell>
        <div className="ml-[29px] w-px h-full bg-[#555] shrink-0" />
      </div>
    </div>
  );
}
